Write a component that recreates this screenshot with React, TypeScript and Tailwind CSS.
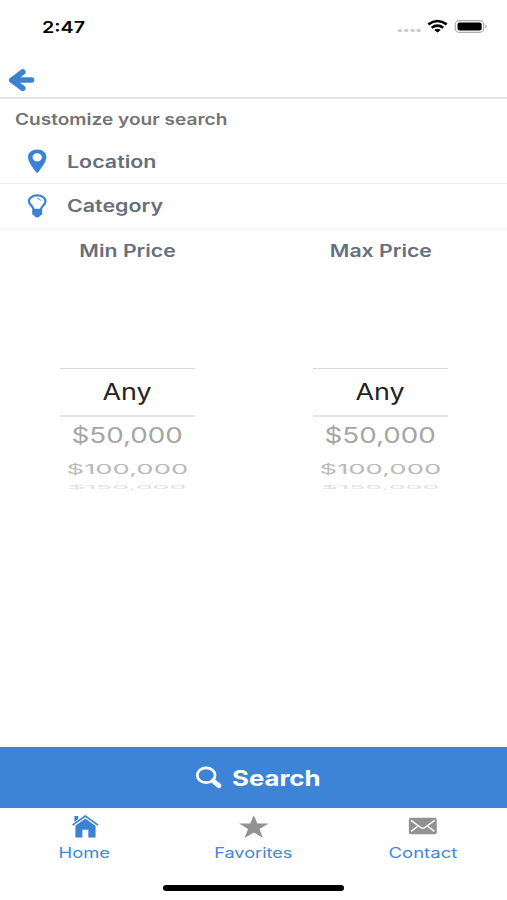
import React from "react";

const prices = [
  { label: "Any", row: "h-[45px]", text: "text-[23px] text-[#222] scale-x-[1.17]" },
  { label: "$50,000", row: "h-[39px]", text: "text-[21px] text-[#a5a5a5] scale-x-[1.32]" },
  { label: "$100,000", row: "h-[28px]", text: "text-[20px] text-[#b9b9b9] scale-x-[1.37] scale-y-[0.68]" },
  { label: "$150,000", row: "h-[8px]", text: "text-[20px] text-[#dedede] scale-x-[1.34] scale-y-[0.25]" },
];

const PricePicker = ({ title }: { title: string }) => {
  return (
    <div className="flex w-[253px] flex-col items-center">
      <div className="flex h-[40px] items-center pt-[2px] text-[17px] font-semibold text-[#66707d]">
        <span className="scale-x-[1.25]">{title}</span>
      </div>
      <div className="mt-[97px] flex w-[135px] flex-col">
        {prices.map((price, i) => (
          <div
            key={price.label}
            className={`flex items-center justify-center ${price.row} ${
              i === 0 ? "box-content border-t border-b-2 border-t-[#d8d8d8] border-b-[#e4e4e4] pt-px" : ""
            } ${i > 0 ? "-translate-y-px" : ""}`}
          >
            <span className={`whitespace-nowrap leading-none ${price.text}`}>{price.label}</span>
          </div>
        ))}
      </div>
    </div>
  );
};

const StatusBar = () => {
  return (
    <div className="flex h-[60px] justify-between pl-[42px] pr-[18px] pt-[15px]">
      <span className="h-[24px] origin-left scale-x-[1.23] text-[16px] font-semibold leading-[24px] text-black">
        2:47
      </span>
      <svg width="92" height="24" viewBox="397 15 92 24">
        <g fill="#cbcbcb">
          <ellipse cx="400" cy="30.5" rx="2.2" ry="1.8" />
          <ellipse cx="406.3" cy="30.5" rx="2.2" ry="1.8" />
          <ellipse cx="412.5" cy="30.5" rx="2.2" ry="1.8" />
          <ellipse cx="418.7" cy="30.5" rx="2.2" ry="1.8" />
        </g>
        <g fill="none" stroke="#000" strokeWidth="2.6">
          <path d="M428.3 24.4Q437.5 17.6 446.7 24.4" />
          <path d="M431.7 27.8Q437.5 23.5 443.3 27.8" />
        </g>
        <path d="M434.2 30Q437.5 27.6 440.8 30L437.5 32.6Z" />
        <rect x="455.3" y="20.7" width="28.4" height="11.6" rx="3.8" fill="#fff" stroke="#aaa" strokeWidth="1.2" />
        <rect x="457.5" y="22.4" width="24.2" height="8.2" rx="2" />
        <path d="M485.5 24.3Q488 26.3 485.5 28.5Z" fill="#999" />
      </svg>
    </div>
  );
};

const App = () => {
  return (
    <div className="flex h-[900px] w-[507px] flex-col overflow-hidden bg-white font-['Inter','Liberation_Sans',sans-serif]">
      <StatusBar />

      <div className="h-[39px] border-b-2 border-[#e3e3e3] pl-[8px] pt-[8px]">
        <svg width="28" height="24" viewBox="8 68 28 24" fill="none" stroke="#3b82d4" strokeLinecap="round" strokeLinejoin="round">
          <path d="M12 80H31.6" strokeWidth="5.4" />
          <path d="M22.7 72L12 80.2L22.7 88.3" strokeWidth="5.8" />
          <path d="M12.5 80.2L19 76V84Z" fill="#3b82d4" />
        </svg>
      </div>

      <div className="flex h-[39px] items-center pl-[15px] pt-[2px] text-[15.5px] font-semibold text-[#737373]">
        <span className="origin-left scale-x-[1.23]">Customize your search</span>
      </div>

      <div className="flex h-[46px] items-center border-b border-[#eee] pl-[27px] text-[17px] font-semibold text-[#66707d]">
        <svg width="20" height="26" viewBox="27 148 20 26">
          <path
            d="M37.2 149.5C31.7 149.5 28 152.8 28 157C28 161.8 32.8 167.6 36.2 172.2Q37.2 173.4 38.2 172.2C41.7 167.5 46.4 161.8 46.4 157C46.4 152.8 42.7 149.5 37.2 149.5ZM37.2 153.3A4.7 4 0 1 1 37.2 161.3A4.7 4 0 1 1 37.2 153.3Z"
            fill="#3b82d4"
            fillRule="evenodd"
          />
        </svg>
        <span className="ml-[20px] origin-left scale-x-[1.26] pt-[4px]">Location</span>
      </div>

      <div className="box-content flex h-[43px] items-center border-b-4 border-[#f8f8f8] pl-[27px] text-[17px] font-semibold text-[#66707d]">
        <svg width="20" height="26" viewBox="27 193 20 26">
          <path
            d="M33.4 209C33.2 206.3 28.9 204.7 28.9 201.3C28.9 197.8 32.6 195.4 37.2 195.4C41.8 195.4 45.5 197.8 45.5 201.3C45.5 204.7 41.2 206.3 41 209"
            fill="none"
            stroke="#3b82d4"
            strokeWidth="2.2"
          />
          <path d="M32.2 208.8H42.2V214Q42 215.2 40.3 215.4Q39.4 217.4 37.2 217.4Q35 217.4 34.1 215.4Q32.4 215.2 32.2 214Z" fill="#3b82d4" />
          <path d="M37.3 198.5Q40.3 198.8 41.2 200.8" fill="none" stroke="#3b82d4" strokeWidth="1" />
        </svg>
        <span className="ml-[20px] origin-left scale-x-[1.26] pt-[3px]">Category</span>
      </div>

      <div className="flex h-[516px] w-[507px] justify-between pl-px">
        <PricePicker title="Min Price" />
        <PricePicker title="Max Price" />
      </div>

      <button className="flex h-[61px] shrink-0 items-center bg-[#3d84d6] pl-[195px] text-[21.5px] font-bold text-white">
        <svg width="28" height="24" viewBox="195 765.5 28 24" fill="none" stroke="#fff">
          <ellipse cx="206.2" cy="774.7" rx="8.9" ry="7.4" strokeWidth="2.7" />
          <path d="M213 780.3L219 785.2" strokeWidth="4.8" strokeLinecap="round" />
        </svg>
        <span className="ml-[9px] origin-left scale-x-[1.2] pt-[2px]">Search</span>
      </button>

      <div className="grid h-[92px] shrink-0 grid-cols-3 grid-rows-[58px_1fr] text-[14.5px] text-[#4387d5]">
        <div className="flex flex-col items-center pt-[6px]">
          <svg width="30" height="26" viewBox="70 813 30 26">
            <path d="M75 825L85.3 817.5L96 825V837.5H88.5V829.5H82.3V837.5H75Z" fill="#3b82d4" />
            <path d="M74 815H78V818.2L74 821.2Z" fill="#3b82d4" />
            <path d="M72 824.6L85.3 815.2L98.6 824.6" fill="none" stroke="#3b82d4" strokeWidth="1.7" />
            <path d="M74 825.3L85.3 817.3L96.6 825.3" fill="none" stroke="#fff" strokeWidth="0.7" />
          </svg>
          <span className="scale-x-[1.27] leading-[27px]">Home</span>
        </div>
        <div className="flex flex-col items-center pt-[6px]">
          <svg width="32" height="26" viewBox="238 813 32 26" fill="#929292">
            <path d="M253.8 814.2L257.5 823H269L259.7 828.5L263.3 838L253.8 832.2L244.2 838L247.8 828.5L238.5 823H250.1Z" />
          </svg>
          <span className="scale-x-[1.25] leading-[27px]">Favorites</span>
        </div>
        <div className="flex flex-col items-center pt-[6px]">
          <svg width="30" height="26" viewBox="408 814 30 26">
            <rect x="408.3" y="818" width="29" height="17" rx="1.8" fill="#929292" />
            <path d="M410.5 820.7L421 828.3Q422.8 829.5 424.6 828.3L435.1 820.7M410.7 832L417.6 826.7M434.9 832L428 826.7" fill="none" stroke="#fff" strokeWidth="1.5" />
          </svg>
          <span className="scale-x-[1.28] leading-[27px]">Contact</span>
        </div>
        <div className="col-span-3 mx-auto mt-[19px] h-[6px] w-[181px] rounded-full bg-black" />
      </div>
    </div>
  );
};

export default App;
